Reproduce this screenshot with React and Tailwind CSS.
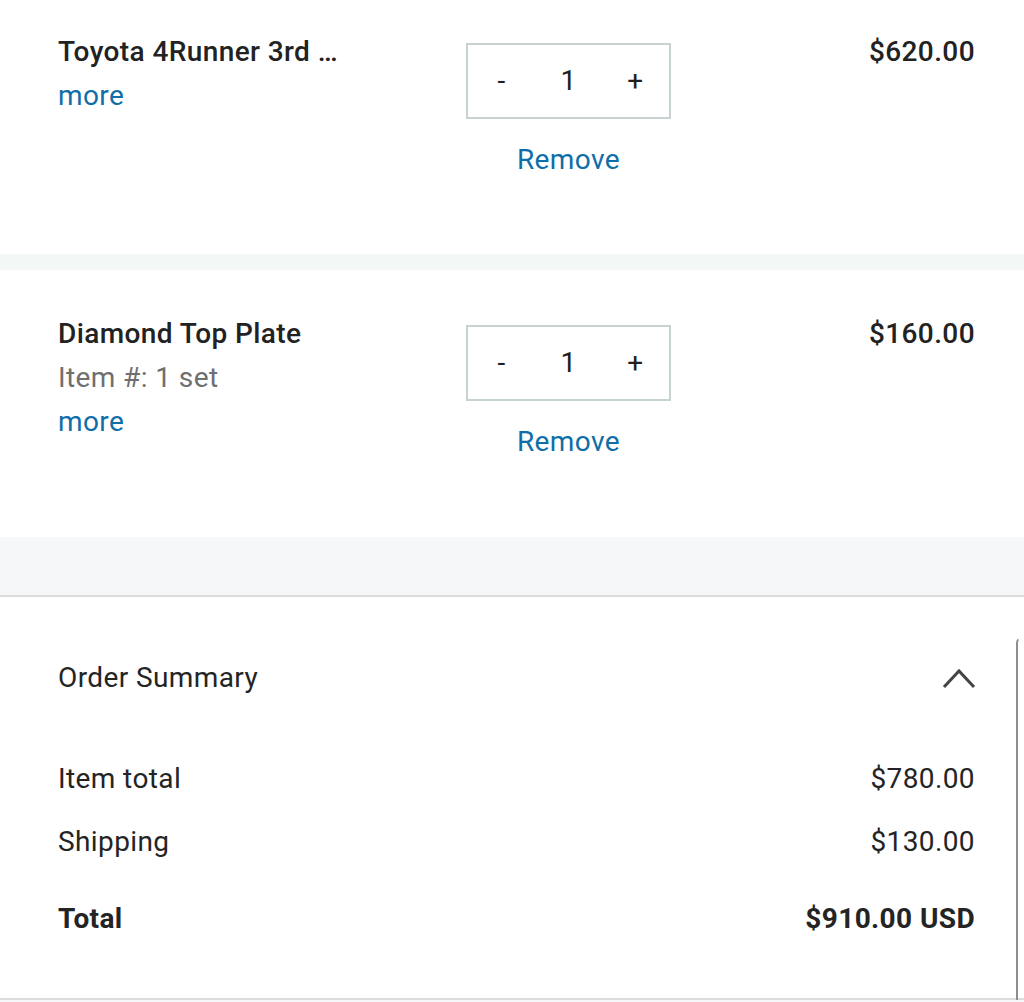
import { ChevronUp } from "lucide-react";

const items = [
  { id: 1, name: "Toyota 4Runner 3rd …", sku: null, qty: 1, price: "$620.00" },
  { id: 2, name: "Diamond Top Plate", sku: "1 set", qty: 1, price: "$160.00" },
];

const Stepper = ({ qty }) => (
  <div className="grid grid-cols-3 items-center w-[205px] h-[76px] border-2 border-[#c9d2d3] text-[28px] text-[#1f1f1f]">
    <button className="text-center">-</button>
    <span className="text-center">{qty}</span>
    <button className="text-center">+</button>
  </div>
);

const CartItem = ({ item, first }) => (
  <div className={`flex bg-white pl-[58px] pr-[49px] ${first ? "h-[254px]" : "h-[267px]"}`}>
    <div className={`w-[408px] ${first ? "pt-[30px]" : "pt-[42px]"}`}>
      <div className="font-medium text-[#222]">{item.name}</div>
      {item.sku && <div className="text-[#6f6f6f]">Item #: {item.sku}</div>}
      <a className="text-[#0f6ea8]">more</a>
    </div>
    <div className={`w-[205px] flex flex-col items-center ${first ? "pt-[43px]" : "pt-[55px]"}`}>
      <Stepper qty={item.qty} />
      <a className="mt-[19px] text-[#0f6ea8]">Remove</a>
    </div>
    <div className={`flex-1 text-right font-medium text-[#222] ${first ? "pt-[30px]" : "pt-[42px]"}`}>
      {item.price}
    </div>
  </div>
);

export default function App() {
  return (
    <div className="min-h-screen bg-[#f5f7f8] text-[28px] leading-[44px] tracking-[0.4px] font-['Roboto',sans-serif]">
      <CartItem item={items[0]} first />
      <div className="h-[16px] bg-[#f3f8f7]" />
      <CartItem item={items[1]} />
      <div className="h-[58px] bg-[#f5f7f8]" />

      {/* order summary */}
      <div className="relative bg-white border-t-2 border-b-2 border-[#dcdcdc] pl-[58px] pr-[49px] pt-[59px] pb-[57px] text-[#242424]">
        <div className="absolute right-[2px] top-[40px] bottom-[-2px] w-[6px] border-l-2 border-t-2 border-[#8d8d8d] rounded-tl-[10px] border-t-transparent" />
        <div className="flex items-center justify-between">
          <span>Order Summary</span>
          <svg width="34" height="22" viewBox="0 0 34 22" className="mr-[-1px]">
            <polyline points="2,20 17,4 32,20" fill="none" stroke="#444" strokeWidth="3" />
          </svg>
        </div>
        <div className="mt-[57px] flex justify-between">
          <span>Item total</span>
          <span>$780.00</span>
        </div>
        <div className="mt-[19px] flex justify-between">
          <span>Shipping</span>
          <span>$130.00</span>
        </div>
        <div className="mt-[33px] flex justify-between font-bold">
          <span>Total</span>
          <span>$910.00 USD</span>
        </div>
      </div>
    </div>
  );
}
